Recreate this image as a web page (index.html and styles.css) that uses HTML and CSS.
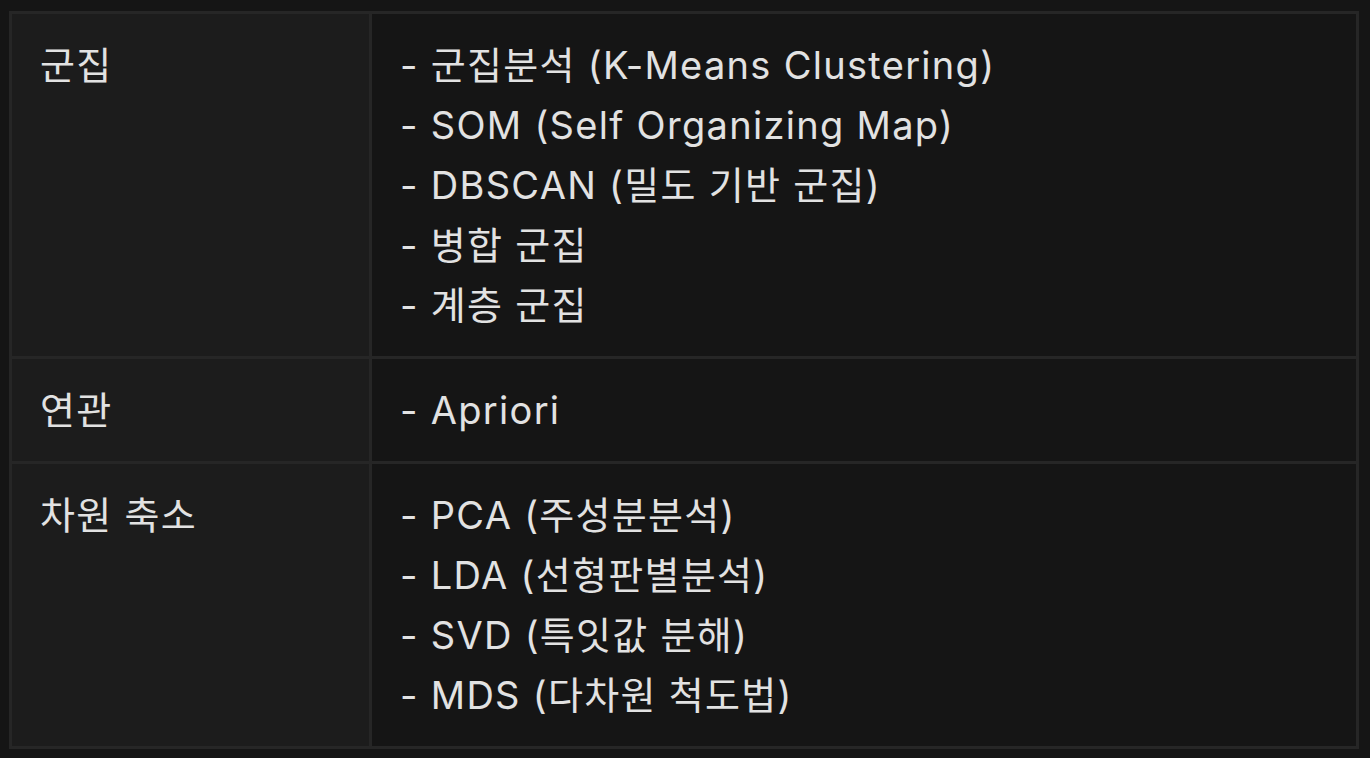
FILE: index.html
```html
<!DOCTYPE html>
<html lang="ko">
<head>
<meta charset="utf-8">
<link rel="stylesheet" href="styles.css">
</head>
<body>
<table class="grid">
  <tr>
    <td class="key">군집</td>
    <td class="val">- 군집분석 (K-Means Clustering)<br>- SOM (Self Organizing Map)<br>- DBSCAN (밀도 기반 군집)<br>- 병합 군집<br>- 계층 군집</td>
  </tr>
  <tr>
    <td class="key">연관</td>
    <td class="val">- Apriori</td>
  </tr>
  <tr>
    <td class="key">차원 축소</td>
    <td class="val">- PCA (주성분분석)<br>- LDA (선형판별분석)<br>- SVD (특잇값 분해)<br>- MDS (다차원 척도법)</td>
  </tr>
</table>
</body>
</html>
```
FILE: styles.css
```css
html, body {
  margin: 0;
  background: #151515;
}
body {
  padding: 11px 11px 0 9px;
  font-family: Inter, "Noto Sans CJK KR", sans-serif;
  color: #e2e2e2;
}
.grid {
  width: 1350px;
  border-collapse: collapse;
  font-size: 38px;
  line-height: 60px;
  letter-spacing: 1.3px;
}
.grid td {
  border: 3px solid #262626;
  padding: 21px 27px 21px 28px;
  vertical-align: top;
}
.key {
  width: 302px;
  background: #1c1c1c;
}
.val {
  background: #151515;
}
```
